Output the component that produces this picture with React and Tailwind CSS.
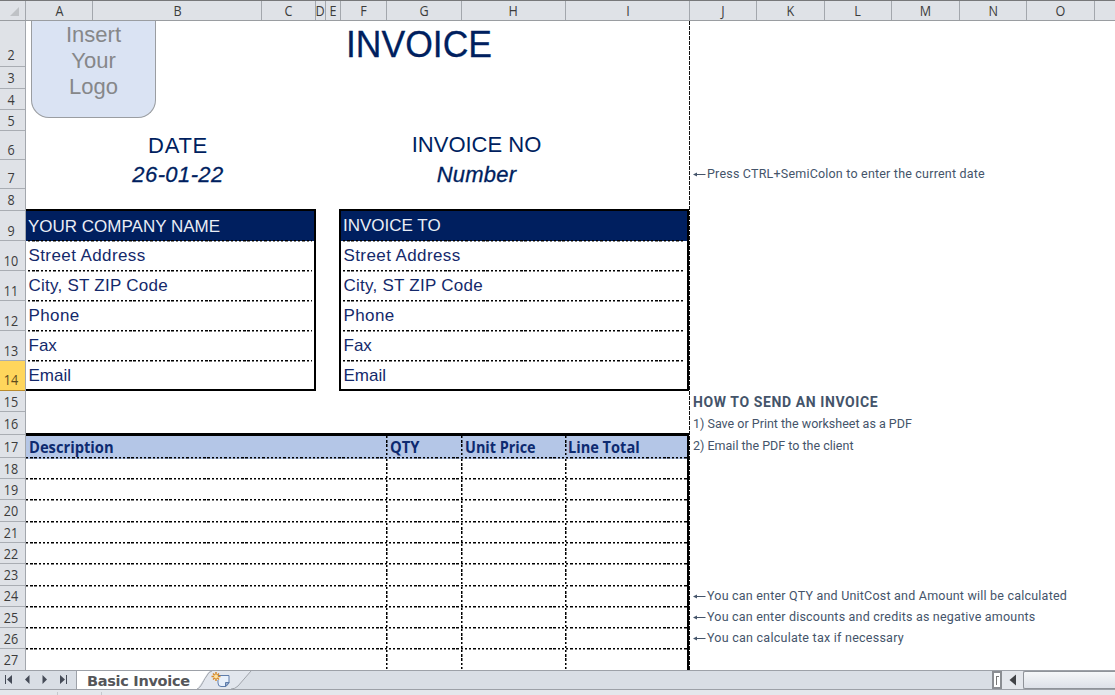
import clsx from 'clsx'

const COLS = [
  { name: 'A', cls: 'w-[67px]' },
  { name: 'B', cls: 'w-[169px] pl-[2px]' },
  { name: 'C', cls: 'w-[54px]' },
  { name: 'D', cls: 'w-[10px]' },
  { name: 'E', cls: 'w-[15px]' },
  { name: 'F', cls: 'w-[46px]' },
  { name: 'G', cls: 'w-[75px]' },
  { name: 'H', cls: 'w-[104px]' },
  { name: 'I', cls: 'w-[124px]' },
  { name: 'J', cls: 'w-[67px]' },
  { name: 'K', cls: 'w-[68px]' },
  { name: 'L', cls: 'w-[67px]' },
  { name: 'M', cls: 'w-[68px]' },
  { name: 'N', cls: 'w-[67px]' },
  { name: 'O', cls: 'w-[68px]' },
]

const ROWS = [
  { n: 2, cls: 'h-[46px] pb-[3px]' },
  { n: 3, cls: 'h-[22px] pb-[2px]' },
  { n: 4, cls: 'h-[21px] pb-px' },
  { n: 5, cls: 'h-[21px] pb-px' },
  { n: 6, cls: 'h-[29px] pb-px' },
  { n: 7, cls: 'h-[29px] pb-[2px]' },
  { n: 8, cls: 'h-[22px] pb-[2px]' },
  { n: 9, cls: 'h-[30px] pb-px' },
  { n: 10, cls: 'h-[30px] pb-px' },
  { n: 11, cls: 'h-[30px] pb-px' },
  { n: 12, cls: 'h-[30px] pb-px' },
  { n: 13, cls: 'h-[30px] pb-px' },
  { n: 14, cls: 'h-[30px] pb-[2px]' },
  { n: 15, cls: 'h-[21px] pb-px' },
  { n: 16, cls: 'h-[23px] pb-[2px]' },
  { n: 17, cls: 'h-[23px] pb-[2px]' },
  { n: 18, cls: 'h-[21px] pb-px' },
  { n: 19, cls: 'h-[21px] pb-px' },
  { n: 20, cls: 'h-[22px] pb-[2px]' },
  { n: 21, cls: 'h-[21px] pb-px' },
  { n: 22, cls: 'h-[21px] pb-px' },
  { n: 23, cls: 'h-[22px] pb-[2px]' },
  { n: 24, cls: 'h-[21px] pb-[2px]' },
  { n: 25, cls: 'h-[21px] pb-px' },
  { n: 26, cls: 'h-[21px] pb-px' },
  { n: 27, cls: 'h-[22px] pb-[2px]' },
]

const ADDRESS = [
  { text: 'Street Address', cls: 'tracking-[0.4px]' },
  { text: 'City, ST ZIP Code', cls: 'tracking-[0.25px]' },
  { text: 'Phone', cls: 'tracking-[0.4px]' },
  { text: 'Fax', cls: '' },
  { text: 'Email', cls: '' },
]

function HDash({ className }) {
  return (
    <div className={clsx('h-[2px] shrink-0', className)}>
      <div className="h-px bg-[repeating-linear-gradient(90deg,#000_0_2.3px,transparent_2.3px_4.22px)]" />
      <div className="h-px bg-[repeating-linear-gradient(90deg,#000_0_2.3px,transparent_2.3px_4.22px)] opacity-50" />
    </div>
  )
}

function VDash() {
  return (
    <div className="flex h-full w-[2px] shrink-0">
      <div className="w-px bg-[repeating-linear-gradient(180deg,#000_0_2.3px,transparent_2.3px_4.22px)]" />
      <div className="w-px bg-[repeating-linear-gradient(180deg,#000_0_2.3px,transparent_2.3px_4.22px)] opacity-50" />
    </div>
  )
}

function ColumnHeaders() {
  return (
    <div className="flex h-[21px] shrink-0 border-t border-b border-t-[#77787a] border-b-[#9a9da1] bg-[#dfe2e7]">
      <div className="flex w-[26px] shrink-0 items-end justify-end border-r border-[#a3a7ad] pr-[6px] pb-[4px]">
        <svg width="9" height="9" viewBox="0 0 9 9"><path d="M9 0V9H0Z" fill="#bfc2c6" /></svg>
      </div>
      {COLS.map(c => (
        <div key={c.name} className={clsx('flex shrink-0 items-center justify-center border-r border-[#a3a7ad] font-["Open_Sans",sans-serif] text-[14px] leading-none text-[#3c3c3c]', c.cls)}>
          <span className="scale-x-90">{c.name}</span>
        </div>
      ))}
    </div>
  )
}

function RowHeaders() {
  return (
    <div className="w-[26px] shrink-0 border-r border-[#a3a7ad] bg-[#dfe2e7]">
      {ROWS.map(r => (
        <div
          key={r.n}
          className={clsx(
            'flex items-end justify-center border-b pr-[3px] font-["Open_Sans",sans-serif] text-[14px] leading-[16px]',
            r.n === 14 ? 'border-[#b98a2c] bg-[#ffd65c] text-[#5e4b1c]' : 'border-[#a9adb3] text-[#3c3c3c]',
            r.cls,
          )}
        >
          <span className="scale-x-90">{r.n}</span>
        </div>
      ))}
    </div>
  )
}

function AddressBox({ title, className, titleClass, textClass }) {
  return (
    <div className={clsx('h-[182px] border-2 border-black text-[17px] text-[#14296b]', className)}>
      <div className={clsx('h-[29px] bg-[#001f5f] pl-[2px] text-[#e9edf5]', titleClass)}>{title}</div>
      {ADDRESS.map((a, i) => (
        <div key={a.text} className={clsx('h-[30px]', i === 0 && 'bg-[linear-gradient(#001f5f_1px,transparent_1px)]')}>
          <HDash className="mx-[2px]" />
          <div className={clsx('h-[28px] leading-[27px]', textClass, a.cls)}>{a.text}</div>
        </div>
      ))}
    </div>
  )
}

function ItemRow({ cells = [], className }) {
  return (
    <div className={clsx('flex flex-col', className)}>
      <div className="flex min-h-0 flex-1 items-end font-['Open_Sans',sans-serif] text-[16px] leading-[20px] font-bold whitespace-nowrap text-[#0d2a70]">
        <div className="w-[360px] pl-[3px]"><span className="inline-block origin-left scale-x-92">{cells[0]}</span></div>
        <VDash />
        <div className="w-[73px] pl-[2px]"><span className="inline-block origin-left scale-x-92">{cells[1]}</span></div>
        <VDash />
        <div className="w-[102px] pl-[2px]"><span className="inline-block origin-left scale-x-90">{cells[2]}</span></div>
        <VDash />
        <div className="pl-px"><span className="inline-block origin-left scale-x-91">{cells[3]}</span></div>
      </div>
      <HDash />
    </div>
  )
}

function Invoice() {
  return (
    <div className="flex w-[663px] shrink-0 flex-col font-['Liberation_Sans',Arial,sans-serif] text-[#001f5f]">
      <div className="flex h-[110px] shrink-0">
        <div className="ml-[5px] h-[97px] w-[125px] rounded-b-[18px] border border-t-0 border-[#9a9da1] bg-[#dae3f3] pt-px text-center text-[22px] leading-[26px] text-[#868789]">
          <div>Insert</div>
          <div>Your</div>
          <div>Logo</div>
        </div>
        <h1 className="ml-[190px] origin-left scale-x-96 text-[37px] leading-[48px] [-webkit-text-stroke:0.3px_#001f5f]">INVOICE</h1>
      </div>
      <div className="flex h-[78px] shrink-0 text-[22px] leading-[29px]">
        <div className="w-[304px] text-center">
          <div className="tracking-[0.7px]">DATE</div>
          <div className="tracking-[0.4px] italic [-webkit-text-stroke:0.3px_#001f5f]">26-01-22</div>
        </div>
        <div className="ml-[9px] w-[275px] text-center">
          <div className="-mt-px">INVOICE NO</div>
          <div className="mt-px tracking-[0.2px] italic [-webkit-text-stroke:0.3px_#001f5f]">Number</div>
        </div>
      </div>
      <div className="flex h-[224px] shrink-0 justify-between">
        <AddressBox title="YOUR COMPANY NAME" className="w-[290px] border-l-0" titleClass="leading-[31px]" textClass="pl-[2.5px]" />
        <AddressBox title="INVOICE TO" className="w-[350px]" titleClass="leading-[29px]" textClass="pl-[2.5px]" />
      </div>
      <div className="flex-1 border-t-[3px] border-r-2 border-black">
        <ItemRow cells={['Description', 'QTY', 'Unit Price', 'Line Total']} className="h-[23px] bg-[#b4c6e7]" />
        {ROWS.slice(16).map(r => <ItemRow key={r.n} className={r.cls.split(' ')[0]} />)}
      </div>
    </div>
  )
}

function Note({ children, className }) {
  return (
    <div className={clsx('flex h-[21px] items-center whitespace-nowrap', className)}>
      <svg className="mr-px shrink-0" width="13" height="7" viewBox="0 0 13 7"><path d="M0 3.500L4 1.500V5.500ZM3 3H12.500V4H3Z" fill="#44546a" /></svg>
      {children}
    </div>
  )
}

function Notes() {
  return (
    <div className="flex flex-1">
      <div className="w-px bg-[repeating-linear-gradient(180deg,#111_0_3.8px,transparent_3.8px_5px)]" />
      <div className="flex-1 pl-[3px] font-['Roboto',sans-serif] text-[12.5px] text-[#44546a]">
        <Note className="mt-[143px] tracking-[0.2px]">Press CTRL+SemiColon to enter the current date</Note>
        <div className="mt-[206px] h-[22px] text-[14px] leading-[22px] font-bold tracking-[0.6px] whitespace-nowrap">HOW TO SEND AN INVOICE</div>
        <div className="h-[22px] leading-[22px]">1) Save or Print the worksheet as a PDF</div>
        <div className="h-[22px] leading-[22px]">2) Email the PDF to the client</div>
        <Note className="mt-[129px] tracking-[0.21px]">You can enter QTY and UnitCost and Amount will be calculated</Note>
        <Note className="tracking-[0.2px]">You can enter discounts and credits as negative amounts</Note>
        <Note className="tracking-[0.25px]">You can calculate tax if necessary</Note>
      </div>
    </div>
  )
}

function TabBar() {
  return (
    <div className="flex h-[25px] shrink-0 flex-col bg-[#e4e7ec]">
      <div className="flex h-[20px] border-t border-b border-[#9da1a8] bg-[#d9dee5]">
        <svg className="shrink-0" width="76" height="18" viewBox="0 0 76 18" fill="#454b57">
          <path d="M5 4h1v9H5ZM12 4v9L7 8.500Z" />
          <path d="M29.500 4v9L25 8.500Z" />
          <path d="M42.500 4v9L47 8.500Z" />
          <path d="M60 4v9L65 8.500ZM66 4h1v9H66Z" />
        </svg>
        <div className="flex w-[121px] shrink-0 items-center border-l border-[#9da1a8] bg-white pt-[2px] pl-[10px] font-['DejaVu_Sans',Verdana,sans-serif] text-[14.5px] leading-none font-bold text-[#55565a]">
          <span className="whitespace-nowrap tracking-[-0.3px]">Basic Invoice</span>
        </div>
        <svg className="shrink-0" width="56" height="18" viewBox="0 0 56 18">
          <path d="M0 0H13L0 18Z" fill="#fff" />
          <path d="M-1 18C3 17 5 11 8 6Q11 0 14 0H54L41 15Q38 18 34 18Z" fill="#e2e6ed" />
          <path d="M0 18C4 17 6 10 9 6Q12 0 15 0M54 0L41 15Q38 18 34 18" fill="none" stroke="#a0a4ab" />
          <path d="M18 4.500H32V12L29 15.500H24Q21 15.500 21 12V9" fill="#e8f0fb" stroke="#5f7dab" />
          <path d="M32 11.500H28.500V15.500Z" fill="#9db4d8" stroke="#5f7dab" />
          <path d="M19 1V10M14.500 5.500H23.500M16 2.500L22 8.500M22 2.500L16 8.500" stroke="#d88a2a" strokeWidth="1.500" />
          <circle cx="19" cy="5.500" r="2" fill="#ffe3a0" />
        </svg>
        <div className="flex-1" />
        <div className="flex w-[10px] items-center justify-center border-2 border-[#8b8e93] bg-white">
          <div className="h-[9px] w-[3px] border-t border-l border-[#777]" />
        </div>
        <div className="flex w-[21px] items-center justify-center bg-[#e4e7ec]">
          <svg width="7" height="12" viewBox="0 0 7 12"><path d="M7 0.500V11.500L0.500 6Z" fill="#414347" /></svg>
        </div>
        <div className="w-[92px] rounded-l-[2px] border border-r-0 border-[#8f9399] bg-linear-to-b from-[#f5f7f9] to-[#dde1e8]" />
      </div>
      <div className="flex h-[5px] pt-[2px]">
        <div className="w-[58px] border-r border-[#c5c8cd]" />
        <div className="w-[44px] border-r border-[#c5c8cd]" />
      </div>
    </div>
  )
}

export default function App() {
  return (
    <div className="flex h-[695px] w-[1115px] flex-col overflow-hidden bg-white">
      <ColumnHeaders />
      <div className="flex h-[649px] shrink-0 overflow-hidden">
        <RowHeaders />
        <Invoice />
        <Notes />
      </div>
      <TabBar />
    </div>
  )
}
